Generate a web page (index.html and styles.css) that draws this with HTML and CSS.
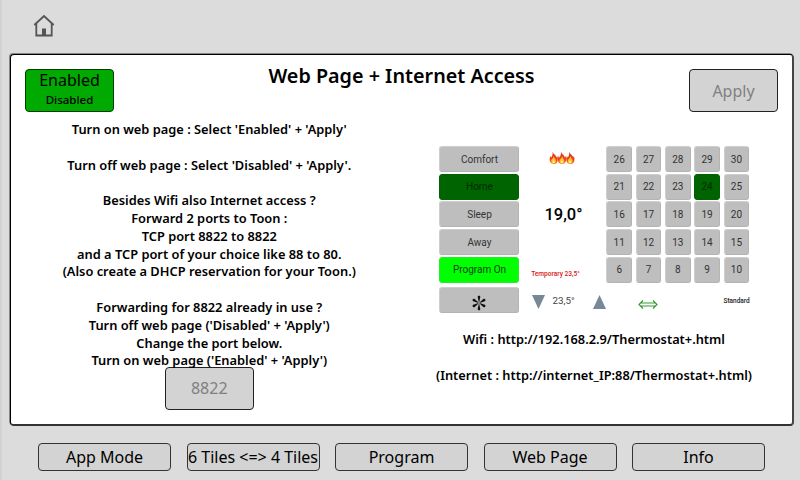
FILE: index.html
```html
<!DOCTYPE html>
<html lang="en">
<head>
<meta charset="utf-8">
<title>Web Page + Internet Access</title>
<link rel="stylesheet" href="styles.css">
</head>
<body>
<header class="topbar">
  <svg class="home" viewBox="0 0 22 24"><path d="M1.300 11 11 2l9.700 9M3.300 9.500V21.500H18.700V9.500" fill="none" stroke="#555" stroke-width="1.800"/><path d="M9 14.500h4V22H9z" fill="#555"/></svg>
</header>
<main class="panel">
  <div class="heading">
    <div class="toggle"><span class="on">Enabled</span><span class="off">Disabled</span></div>
    <h1>Web Page + Internet Access</h1>
    <div class="apply">Apply</div>
  </div>
  <div class="content">
    <section class="help">
      <p>Turn on web page : Select 'Enabled' + 'Apply'</p>
      <p></p>
      <p>Turn off web page : Select 'Disabled' + 'Apply'.</p>
      <p></p>
      <p>Besides Wifi also Internet access ?</p>
      <p>Forward 2 ports to Toon :</p>
      <p>TCP port 8822 to 8822</p>
      <p>and a TCP port of your choice like 88 to 80.</p>
      <p>(Also create a DHCP reservation for your Toon.)</p>
      <p></p>
      <p>Forwarding for 8822 already in use ?</p>
      <p>Turn off web page ('Disabled' + 'Apply')</p>
      <p>Change the port below.</p>
      <p>Turn on web page ('Enabled' + 'Apply')</p>
      <div class="port">8822</div>
    </section>
    <section class="preview">
      <div class="thermostat">
        <div class="modes">
          <div class="key">Comfort</div>
          <div class="key active">Home</div>
          <div class="key">Sleep</div>
          <div class="key">Away</div>
          <div class="key program">Program On</div>
        </div>
        <div class="readout">
          <svg class="flames" viewBox="0 0 26 14">
            <defs>
              <linearGradient id="fire" x1="0" y1="0" x2="0" y2="1"><stop offset="0" stop-color="#c92d1c"/><stop offset=".6" stop-color="#f4411e"/><stop offset="1" stop-color="#ef6b1e"/></linearGradient>
              <g id="flame"><path d="M3.600.5C4 3 7 4 7.600 6.500L8.300 5C9.700 9 8.500 13 4.700 13S-.3 9 1.300 5l.8 1.500C3.600 4.500 3.800 3 3.600.5z" fill="url(#fire)"/><path d="M4.800 5C5 7.500 7.200 8.200 6.900 10.500 6.700 12 5.800 12.600 4.700 12.600S2.200 11.800 2.200 10C2.200 8 4.600 7.500 4.800 5z" fill="#ffc928"/><path d="M4.700 9c.2 1 1 1.300.9 2.300-.2 1.200-1.800 1.200-2 0C3.500 10.300 4.500 10 4.700 9z" fill="#fff3a0"/></g>
            </defs>
            <use href="#flame"/><use href="#flame" x="8.300"/><use href="#flame" x="16.600"/>
          </svg>
          <div class="temperature">19,0°</div>
          <div class="temporary">Temporary 23,5°</div>
        </div>
        <div class="degrees">
          <div class="key">26</div><div class="key">27</div><div class="key">28</div><div class="key">29</div><div class="key">30</div>
          <div class="key">21</div><div class="key">22</div><div class="key">23</div><div class="key active">24</div><div class="key">25</div>
          <div class="key">16</div><div class="key">17</div><div class="key">18</div><div class="key">19</div><div class="key">20</div>
          <div class="key">11</div><div class="key">12</div><div class="key">13</div><div class="key">14</div><div class="key">15</div>
          <div class="key">6</div><div class="key">7</div><div class="key">8</div><div class="key">9</div><div class="key">10</div>
        </div>
      </div>
      <div class="controls">
        <div class="key fan"><svg viewBox="0 0 16 16"><g fill="#111"><path id="blade" d="M8 8.300 6.700 2C6.600.3 9.400.3 9.300 2z"/><use href="#blade" transform="rotate(60 8 8)"/><use href="#blade" transform="rotate(120 8 8)"/><use href="#blade" transform="rotate(180 8 8)"/><use href="#blade" transform="rotate(240 8 8)"/><use href="#blade" transform="rotate(300 8 8)"/></g><circle cx="8" cy="8" r=".8" fill="#bebebe"/></svg></div>
        <svg class="arrow down" viewBox="0 0 13 14"><path d="M0 0h13L6.500 14z"/></svg>
        <span class="setpoint">23,5°</span>
        <svg class="arrow up" viewBox="0 0 13 14"><path d="M0 14h13L6.500 0z"/></svg>
        <svg class="swap" viewBox="0 0 20 9"><path d="M3 3h14M3 6h14M5 .5 1 4.500l4 4M15 .5l4 4-4 4" fill="none" stroke="#369a36" stroke-width="1.200"/></svg>
        <span class="standard">Standard</span>
      </div>
      <p class="wifi">Wifi : http://192.168.2.9/Thermostat+.html</p>
      <p class="internet">(Internet : http://internet_IP:88/Thermostat+.html)</p>
    </section>
  </div>
</main>
<nav class="tabs">
  <div>App Mode</div>
  <div>6 Tiles &lt;=&gt; 4 Tiles</div>
  <div>Program</div>
  <div>Web Page</div>
  <div>Info</div>
</nav>
</body>
</html>
```
FILE: styles.css
```css
* { box-sizing: border-box; }
body {
  margin: 0;
  width: 800px;
  height: 480px;
  overflow: hidden;
  background: #dcdcdc;
  border-left: 2px solid #d2d2d2;
  font-family: "Noto Sans", sans-serif;
  color: #000;
  white-space: nowrap;
}
h1, p { margin: 0; }
.topbar { height: 54px; padding: 14px 0 0 31px; }
.home { display: block; width: 22px; height: 24px; }
.panel {
  width: 784px;
  height: 372px;
  margin-left: 8px;
  padding: 14px 14px 0;
  background: #fff;
  border: 1px solid #000;
  border-width: 1px 2px 2px 1px;
  border-right-color: #444;
  border-bottom-color: #333;
  border-radius: 4px;
  box-shadow: -1px -1px 0 #858585;
}
.heading { display: flex; justify-content: space-between; height: 50px; }
h1 {
  padding-top: 1px;
  font-size: 19.750px;
  line-height: 12px;
  font-weight: 600;
}
.toggle, .apply, .port {
  width: 89px;
  height: 43px;
  border: 1px solid #222;
  border-radius: 4px;
  background: #d3d3d3;
  text-align: center;
}
.toggle { background: #00aa00; border-color: #003c00; }
.toggle span { display: block; }
.on { font-size: 16px; line-height: 20px; }
.off { font-size: 11.500px; line-height: 19px; font-weight: 500; }
.apply, .port { color: #808080; font-size: 16px; line-height: 42px; }
.content { display: flex; }
.help {
  width: 369px;
  padding-top: 2px;
  text-align: center;
  font-size: 12.850px;
  font-weight: 600;
}
.help p { height: 17.800px; line-height: 17.800px; }
.port { margin: -3px auto 0; font-weight: 400; line-height: 41px; }
.preview { width: 385px; padding: 27px 0 0 46px; font-family: Roboto, sans-serif; }
.thermostat { display: grid; grid-template-columns: 81px 86px 144px; }
.modes { display: grid; grid-auto-rows: 26px; row-gap: 1.700px; }
.degrees { display: grid; grid-template-columns: repeat(5, 25.500px); grid-auto-rows: 26px; gap: 1.700px 3.800px; }
.key {
  display: flex;
  align-items: center;
  justify-content: center;
  background: #bebebe;
  border: 1px solid #b4b4b4;
  border-top-color: #cecece;
  border-left-color: #cecece;
  border-radius: 3px;
  color: #333;
  font-size: 10px;
}
.modes .key, .fan { margin-right: 1px; }
.key.active { background: #006400; border-color: #046004; color: #002d00; }
.key.program { background: #00ff00; border-color: #20ef20; color: #164016; }
.readout { display: flex; flex-direction: column; align-items: center; }
.flames { width: 26px; height: 14px; margin: 5px 3px 0 0; }
.temperature { margin: 40px 0 0 0; font-size: 16.500px; line-height: 20px; font-weight: 500; }
.temporary { margin-top: 45px; margin-right: 16px; color: #d42020; font-size: 6.600px; line-height: 8px; font-weight: 500; }
.controls { display: flex; height: 26px; margin-top: 4.500px; }
.fan { width: 80px; height: 26px; padding-top: 5px; }
.fan svg { width: 16px; height: 16px; }
.arrow { width: 13px; height: 14px; fill: #778899; margin-top: 8px; }
.down { margin-left: 12px; }
.setpoint { width: 24px; margin: 8px 0 0 7px; font-size: 9.800px; line-height: 12px; color: #444; }
.up { margin-left: 17px; }
.swap { width: 20px; height: 9px; margin: 13px 0 0 32px; }
.standard { margin: 10px 0 0 65px; font-size: 6.500px; line-height: 8px; color: #222; font-weight: 500; }
.wifi, .internet {
  width: 309px;
  margin-top: 17px;
  display: flex;
  justify-content: center;
  font: 600 12.800px/18px "Noto Sans", sans-serif;
}
.internet { margin-top: 18px; }
.tabs { display: flex; gap: 15.500px; padding: 17px 0 0 36px; }
.tabs div {
  width: 133px;
  height: 28px;
  display: flex;
  justify-content: center;
  align-items: center;
  background: #d3d3d3;
  border: 1px solid #333;
  border-radius: 4px;
  font-size: 16px;
}
```
